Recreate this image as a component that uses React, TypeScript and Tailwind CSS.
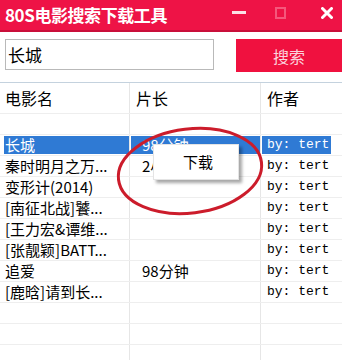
import React from "react";

const CJK = "font-['Noto_Sans_CJK_SC','Noto_Sans',sans-serif]";
const MONO = "font-['Liberation_Mono','Noto_Sans_CJK_SC',monospace]";

interface Movie {
  name: string;
  length: string;
  author: string;
}

const MOVIES: Movie[] = [
  { name: "长城", length: "98分钟", author: "by: tert" },
  { name: "秦时明月之万...", length: "2小时", author: "by: tert" },
  { name: "变形计(2014)", length: "", author: "by: tert" },
  { name: "[南征北战]饕...", length: "", author: "by: tert" },
  { name: "[王力宏&谭维...", length: "", author: "by: tert" },
  { name: "[张靓颖]BATT...", length: "", author: "by: tert" },
  { name: "追爱", length: "98分钟", author: "by: tert" },
  { name: "[鹿晗]请到长...", length: "", author: "by: tert" },
];

const COLS = "grid grid-cols-[130px_131px_81px]";

function Row({ movie, selected }: { movie?: Movie; selected?: boolean }) {
  const cell = selected ? "bg-[#2f7ad4] text-white" : "text-black";
  return (
    <div className={`${COLS} h-[21px] border-b border-[#eeeeee] text-[15px]`}>
      <div className="border-r border-[#e6e6e6] pl-1">
        <div className={`${cell} pl-[1px] h-[18px] leading-[18px] mt-[1px] whitespace-nowrap`}>
          {movie?.name}
        </div>
      </div>
      <div className="border-r border-[#e6e6e6] pl-[1px]">
        <div className={`${cell} pl-[11px] h-[18px] leading-[18px] mt-[1px] whitespace-nowrap`}>
          {movie?.length}
        </div>
      </div>
      <div className="pl-[1px] pr-[11px]">
        <div className={`${cell} ${MONO} text-[13px] pl-[5px] h-[18px] leading-[18px] mt-[1px] whitespace-nowrap`}>
          {movie?.author}
        </div>
      </div>
    </div>
  );
}

export default function App() {
  return (
    <div className={`${CJK} relative w-[342px] h-[360px] overflow-hidden bg-white`}>
      {/* title bar */}
      <div className="h-[32px] bg-[#ee1346] border-b-2 border-[#c90f3a] flex items-center">
        <span className="pl-[5px] text-[17px] font-bold text-white tracking-tight">
          80S电影搜索下载工具
        </span>
        <div className="ml-auto flex items-center h-full">
          <div className="w-[14px] h-[3px] bg-[#fbe0e6] mr-[29px] mb-[6px]" />
          <div className="w-[11px] h-[12px] border-2 border-[#f5577c] mr-[35px] mb-[4px]" />
          <svg width="12" height="12" viewBox="0 0 12 12" className="mr-[9px] mb-[5px]">
            <path d="M1.5 1.5 L10.5 10.5 M10.5 1.5 L1.5 10.5" stroke="#fff" strokeWidth="3" strokeLinecap="round" />
          </svg>
        </div>
      </div>

      {/* search */}
      <div className="flex items-start pt-[7px] pl-[5px]">
        <div className="w-[209px] h-[31px] border border-[#b9b9b9] flex items-center pl-[2px] text-[17px] text-black">
          长城
        </div>
        <button className="ml-[22px] w-[106px] h-[33px] bg-[#f0113f] text-[#fbd3dd] text-[16px] flex items-center justify-center">
          搜索
        </button>
      </div>

      {/* table */}
      <div className="mt-[10px] border-t border-[#c4d2de]">
        <div className={`${COLS} h-[31px] border-b border-[#eeeeee] text-[16px] text-black`}>
          <div className="border-r border-[#e6e6e6] pl-[5px] flex items-center">电影名</div>
          <div className="border-r border-[#e6e6e6] pl-[6px] flex items-center">片长</div>
          <div className="pl-[6px] flex items-center">作者</div>
        </div>
        <Row />
        {MOVIES.map((m, i) => (
          <Row key={i} movie={m} selected={i === 0} />
        ))}
        <Row />
        <Row />
        <Row />
      </div>

      {/* context menu */}
      <div className="absolute left-[153px] top-[144px] w-[86px] h-[36px] bg-white border border-[#e4e4e4] shadow-[3px_3px_3px_rgba(0,0,0,0.35)] flex items-center justify-center pl-[4px] text-[15px] text-black">
        下载
      </div>

      {/* red annotation ellipse */}
      <svg className="absolute left-0 top-0 pointer-events-none" width="342" height="360">
        <ellipse
          cx="190"
          cy="171"
          rx="72"
          ry="42"
          transform="rotate(-7 190 171)"
          fill="none"
          stroke="#cc1c2b"
          strokeWidth="3"
        />
      </svg>
    </div>
  );
}
